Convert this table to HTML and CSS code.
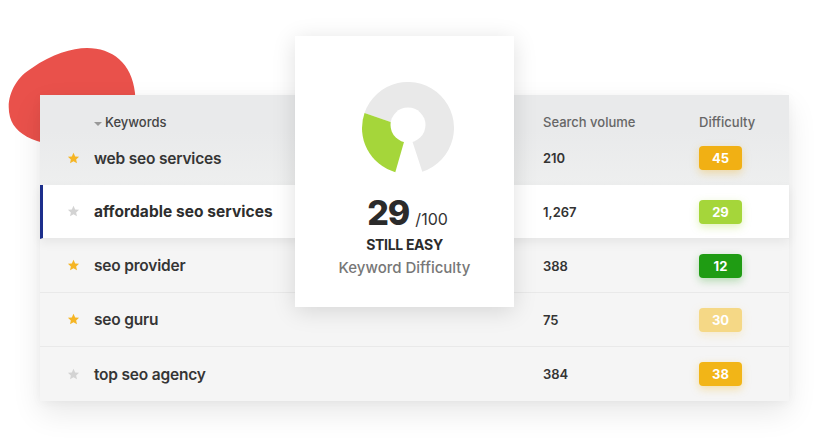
FILE: index.html
```html
<!DOCTYPE html>
<html>
<head>
<meta charset="utf-8">
<link rel="stylesheet" href="styles.css">
</head>
<body>
<div class="stage">
  <svg class="blob" width="140" height="120" viewBox="0 0 140 120">
    <path d="M3,69 C-2,50 8,30 25,20 C45,6 65,0 80,0 C105,0 125,15 128,45 C130,70 110,95 80,100 C60,103 40,96 30,93 C15,88 6,80 3,69 Z" fill="#e9514b"/>
  </svg>

  <div class="table">
    <div class="row head">
      <div class="c-star"></div>
      <div class="c-kw"><span class="caret"></span>Keywords</div>
      <div class="c-vol">Search volume</div>
      <div class="c-dif">Difficulty</div>
    </div>
    <div class="row r1">
      <div class="c-star"><svg class="star gold" viewBox="0 0 24 24"><path d="M12 1.5l3.1 6.6 7.2.8-5.4 4.9 1.5 7.1L12 17.3l-6.4 3.6 1.5-7.1L1.7 8.9l7.2-.8z"/></svg></div>
      <div class="c-kw">web seo services</div>
      <div class="c-vol">210</div>
      <div class="c-dif"><span class="badge b-orange">45</span></div>
    </div>
    <div class="row r2 active">
      <div class="c-star"><svg class="star grey" viewBox="0 0 24 24"><path d="M12 1.5l3.1 6.6 7.2.8-5.4 4.9 1.5 7.1L12 17.3l-6.4 3.6 1.5-7.1L1.7 8.9l7.2-.8z"/></svg></div>
      <div class="c-kw strong">affordable seo services</div>
      <div class="c-vol">1,267</div>
      <div class="c-dif"><span class="badge b-lime">29</span></div>
    </div>
    <div class="row r3">
      <div class="c-star"><svg class="star gold" viewBox="0 0 24 24"><path d="M12 1.5l3.1 6.6 7.2.8-5.4 4.9 1.5 7.1L12 17.3l-6.4 3.6 1.5-7.1L1.7 8.9l7.2-.8z"/></svg></div>
      <div class="c-kw">seo provider</div>
      <div class="c-vol">388</div>
      <div class="c-dif"><span class="badge b-green">12</span></div>
    </div>
    <div class="row r4">
      <div class="c-star"><svg class="star gold" viewBox="0 0 24 24"><path d="M12 1.5l3.1 6.6 7.2.8-5.4 4.9 1.5 7.1L12 17.3l-6.4 3.6 1.5-7.1L1.7 8.9l7.2-.8z"/></svg></div>
      <div class="c-kw">seo guru</div>
      <div class="c-vol">75</div>
      <div class="c-dif"><span class="badge b-pale">30</span></div>
    </div>
    <div class="row r5">
      <div class="c-star"><svg class="star grey" viewBox="0 0 24 24"><path d="M12 1.5l3.1 6.6 7.2.8-5.4 4.9 1.5 7.1L12 17.3l-6.4 3.6 1.5-7.1L1.7 8.9l7.2-.8z"/></svg></div>
      <div class="c-kw">top seo agency</div>
      <div class="c-vol">384</div>
      <div class="c-dif"><span class="badge b-amber">38</span></div>
    </div>
  </div>

  <div class="card">
    <svg class="donut" width="92" height="92" viewBox="4 4 92 92">
      <path d="M50,50 L6.51,35.02 A46,46 0 1 1 64.3,93.7 Z" fill="#e9e9e9"/>
      <path d="M50,50 L37.3,94.2 A46,46 0 0 1 6.51,35.02 Z" fill="#a5d63a"/>
      <circle cx="50" cy="47" r="17.5" fill="#fff"/>
    </svg>
    <div class="score"><span class="big">29</span><span class="of">/100</span></div>
    <div class="label">STILL EASY</div>
    <div class="sub">Keyword Difficulty</div>
  </div>
</div>
</body>
</html>
```

FILE: styles.css
```css
* { box-sizing: border-box; }
html, body { margin: 0; padding: 0; background: #fff; }
body {
  font-family: Inter, "Noto Sans", "Liberation Sans", sans-serif;
  color: #333;
  width: 834px;
  height: 443px;
  overflow: hidden;
}
.stage {
  position: relative;
  width: 834px;
  height: 443px;
  padding: 95px 45px 0 40px;
}
.blob {
  position: absolute;
  left: 7px;
  top: 48px;
}
.table {
  position: relative;
  width: 749px;
  background: #f5f5f5;
  box-shadow: 0 12px 28px rgba(0,0,0,0.09), 0 2px 10px rgba(0,0,0,0.04);
}
.row {
  display: grid;
  grid-template-columns: 54px 449px 156px 1fr;
  align-items: center;
  height: 54px;
  border-bottom: 1px solid #e9e9e9;
}
.row.head {
  height: 36px;
  align-items: end;
  padding-bottom: 1px;
  background: #e9eaeb;
  border-bottom: 0;
  font-size: 13px;
  font-weight: 500;
  color: #555;
}
.row.r1 {
  background: linear-gradient(#e9eaeb, #eeefef);
  border-bottom: 0;
}
.row.r2 {
  background: #fff;
  border-left: 3px solid #1c2f8c;
  grid-template-columns: 51px 449px 156px 1fr;
  position: relative;
  box-shadow: 0 4px 10px rgba(0,0,0,0.06);
  z-index: 1;
}
.row.r5 { border-bottom: 0; }
.c-star {
  display: flex;
  justify-content: flex-end;
  padding-right: 14px;
}
.star { width: 13px; height: 13px; }
.star.gold { fill: #f5b524; }
.star.grey { fill: #d3d3d3; }
.c-kw {
  font-size: 15.5px;
  font-weight: 600;
  color: #353535;
  letter-spacing: -0.2px;
}
.head .c-kw {
  font-size: 13px;
  font-weight: 500;
  color: #444;
  letter-spacing: 0;
  display: flex;
  align-items: center;
}
.caret {
  display: inline-block;
  width: 0;
  height: 0;
  border-left: 4px solid transparent;
  border-right: 4px solid transparent;
  border-top: 4px solid #999;
  margin: 3px 3px 0 0;
}
.c-kw.strong { font-weight: 700; color: #2e2e2e; letter-spacing: 0.05px; }
.c-vol {
  font-size: 13px;
  font-weight: 600;
  color: #333;
}
.head .c-vol, .head .c-dif {
  font-weight: 500;
  color: #666;
}
.c-dif { font-size: 13px; }
.badge {
  display: inline-flex;
  align-items: center;
  justify-content: center;
  width: 43px;
  height: 24px;
  border-radius: 4px;
  color: #fff;
  font-weight: 700;
  font-size: 13px;
}
.b-orange { background: #f1b014; box-shadow: 0 3px 8px rgba(241,176,20,0.35); }
.b-lime { background: #a5d63a; box-shadow: 0 3px 8px rgba(165,214,58,0.35); }
.b-green { background: #1f9c13; box-shadow: 0 3px 8px rgba(31,156,19,0.3); }
.b-pale { background: #f5d886; box-shadow: 0 3px 8px rgba(245,216,134,0.35); }
.b-amber { background: #f2b517; box-shadow: 0 3px 8px rgba(242,181,23,0.35); }

.card {
  position: absolute;
  left: 295px;
  top: 36px;
  width: 219px;
  height: 271px;
  background: #fff;
  box-shadow: 0 4px 22px rgba(0,0,0,0.13);
  display: flex;
  flex-direction: column;
  align-items: center;
  padding-top: 46px;
  z-index: 2;
}
.donut { display: block; margin-left: 7px; }
.score {
  margin-top: 22px;
  display: flex;
  align-items: baseline;
  margin-left: 6px;
  line-height: 1;
  color: #2b2b2b;
}
.big { font-size: 34px; font-weight: 800; letter-spacing: -1px; }
.of { font-size: 16px; font-weight: 400; margin-left: 6px; color: #333; }
.label {
  margin-top: 6px;
  font-size: 14px;
  font-weight: 700;
  color: #2b2b2b;
  letter-spacing: -0.3px;
}
.sub {
  margin-top: 5px;
  font-size: 15px;
  color: #777;
  font-weight: 500;
}
```
